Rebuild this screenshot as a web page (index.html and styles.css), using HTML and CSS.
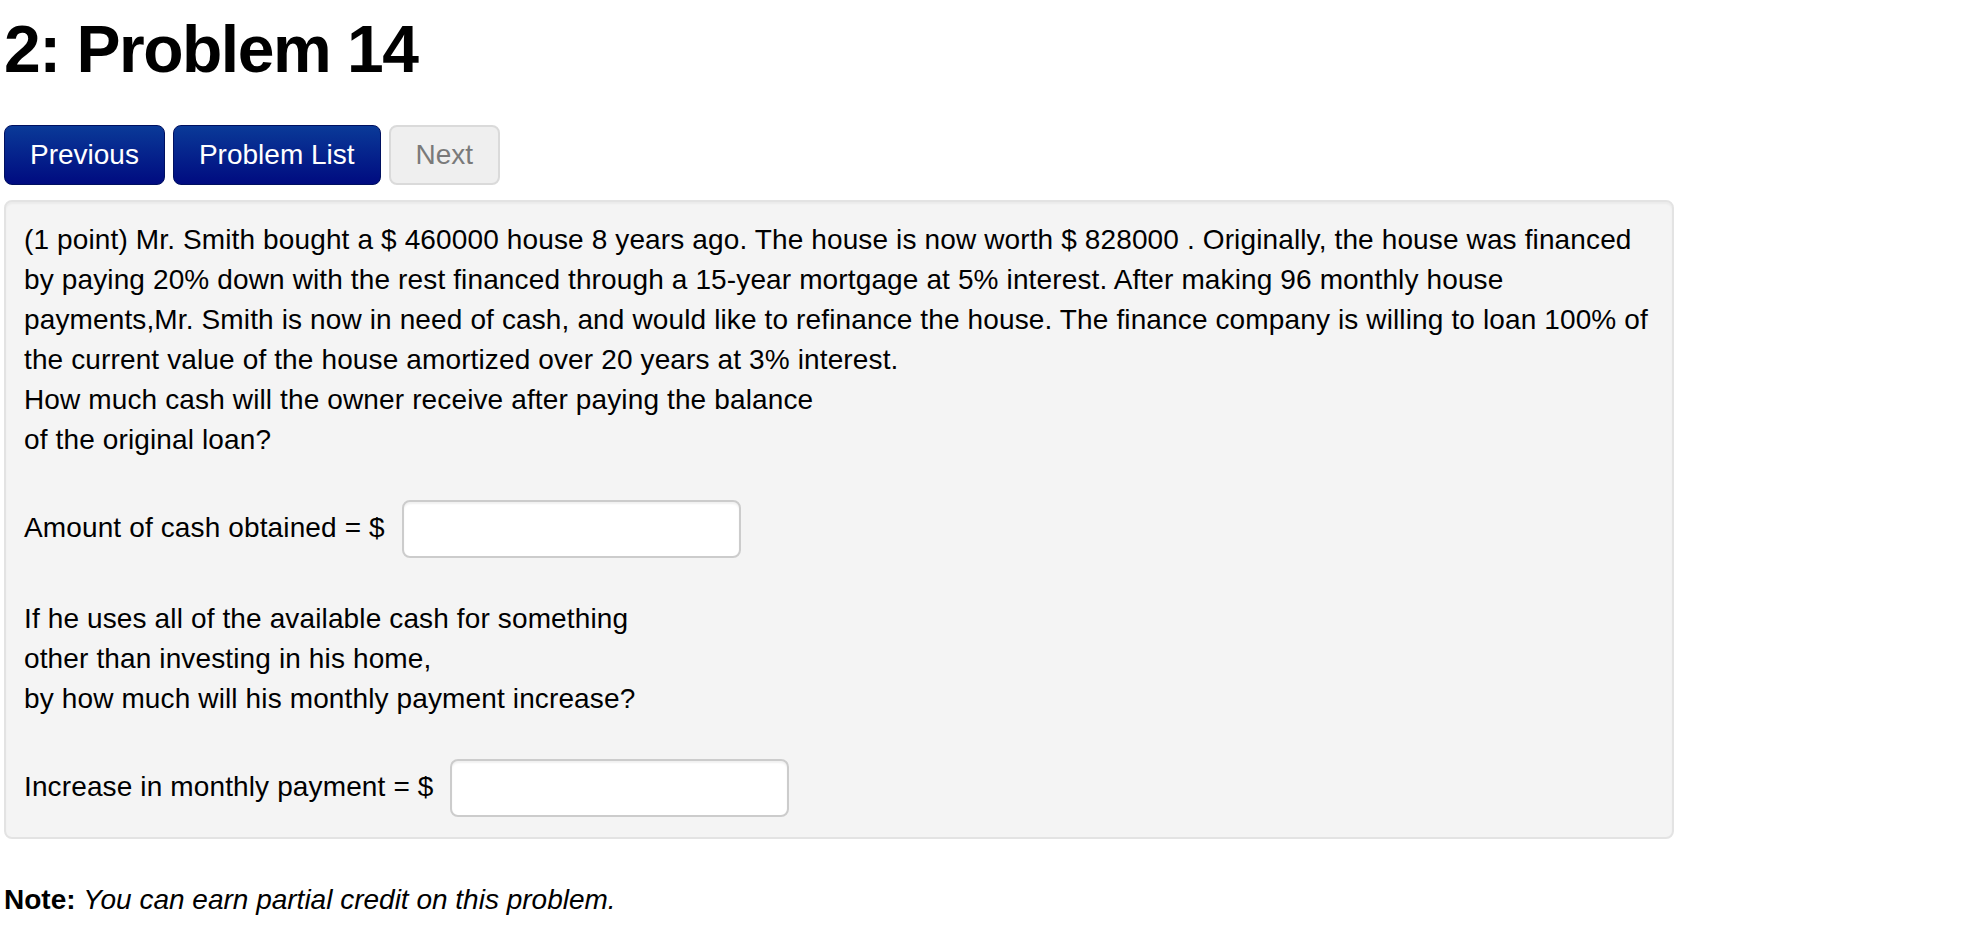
FILE: index.html
```html
<!DOCTYPE html>
<html lang="en">
<head>
<meta charset="utf-8">
<title>2: Problem 14</title>
<link rel="stylesheet" href="styles.css">
</head>
<body>
<div class="page">
  <h1 class="title">2: Problem 14</h1>
  <nav class="nav-buttons">
    <a class="btn btn-primary">Previous</a>
    <a class="btn btn-primary">Problem List</a>
    <a class="btn btn-disabled">Next</a>
  </nav>
  <div class="well">
    <p class="text">(1 point) Mr. Smith bought a $ 460000 house 8 years ago. The house is now worth $ 828000 . Originally, the house was financed by paying 20% down with the rest financed through a 15-year mortgage at 5% interest. After making 96 monthly house payments,Mr. Smith is now in need of cash, and would like to refinance the house. The finance company is willing to loan 100% of the current value of the house amortized over 20 years at 3% interest.<br>How much cash will the owner receive after paying the balance<br>of the original loan?</p>
    <div class="answer-row">
      <span class="label">Amount of cash obtained = $</span>
      <input class="answer" type="text">
    </div>
    <p class="text after-row">If he uses all of the available cash for something<br>other than investing in his home,<br>by how much will his monthly payment increase?</p>
    <div class="answer-row">
      <span class="label">Increase in monthly payment = $</span>
      <input class="answer" type="text">
    </div>
  </div>
  <p class="note"><b>Note:</b> <i>You can earn partial credit on this problem.</i></p>
</div>
</body>
</html>
```

FILE: styles.css
```css
html, body {
  margin: 0;
  padding: 0;
  background: #ffffff;
}

body {
  font-family: "Liberation Sans", Arial, Helvetica, sans-serif;
  color: #000000;
  font-size: 28px;
  line-height: 40px;
}

.page {
  padding: 13px 0 0 4px;
  width: 1670px;
}

.title {
  margin: 0;
  font-size: 66px;
  line-height: 73px;
  font-weight: bold;
  letter-spacing: -1.5px;
}

.nav-buttons {
  display: flex;
  gap: 8px;
  margin-top: 39px;
}

.btn {
  display: flex;
  align-items: center;
  justify-content: center;
  height: 60px;
  box-sizing: border-box;
  padding: 0 25px;
  border-radius: 8px;
  font-size: 28px;
  text-decoration: none;
}

.btn-primary {
  color: #ffffff;
  background: linear-gradient(to bottom, #0a3a98, #000b80);
  border: 1px solid #001060;
}

.btn-disabled {
  color: #7a7a7a;
  background: #efefef;
  border: 2px solid #dadada;
}

.well {
  margin-top: 15px;
  background: #f4f4f4;
  border: 2px solid #e3e3e3;
  border-radius: 8px;
  box-shadow: inset 0 2px 2px rgba(0, 0, 0, 0.04);
  padding: 18px 10px 20px 18px;
  letter-spacing: 0.13px;
}

.text {
  margin: 0;
}

.answer-row {
  display: flex;
  align-items: center;
  gap: 17px;
  margin-top: 40px;
}

.label {
  line-height: 40px;
  padding-bottom: 2px;
}

.answer {
  width: 339px;
  height: 58px;
  box-sizing: border-box;
  border: 2px solid #cccccc;
  border-radius: 8px;
  background: #ffffff;
  box-shadow: inset 0 2px 2px rgba(0, 0, 0, 0.06);
  margin: 0;
  font-family: inherit;
  font-size: 28px;
}

.after-row {
  margin-top: 41px;
}

.note {
  margin: 41px 0 0 0;
}
```
